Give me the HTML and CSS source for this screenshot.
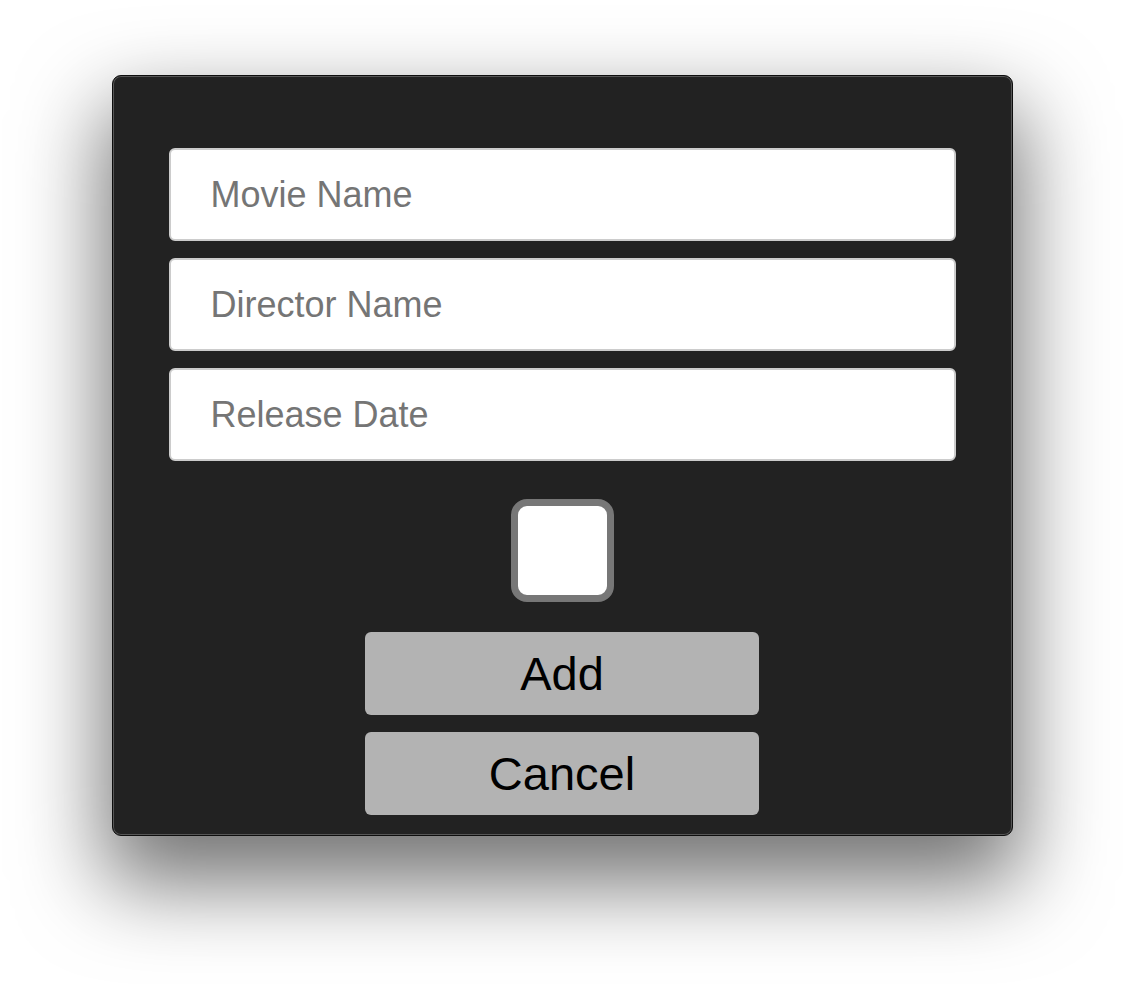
FILE: index.html
```html
<!DOCTYPE html>
<html lang="en">
<head>
<meta charset="utf-8">
<title>Add Movie</title>
<link rel="stylesheet" href="styles.css">
</head>
<body>
<div class="page">
  <div class="window">
    <form class="form">
      <input class="field" type="text" placeholder="Movie Name">
      <input class="field" type="text" placeholder="Director Name">
      <input class="field" type="text" placeholder="Release Date">
      <input class="check" type="checkbox">
      <button class="btn" type="button">Add</button>
      <button class="btn" type="button">Cancel</button>
    </form>
  </div>
</div>
</body>
</html>
```
FILE: styles.css
```css
html, body {
  margin: 0;
  padding: 0;
  background: #ffffff;
  font-family: "Liberation Sans", Arial, sans-serif;
}
.page {
  display: flex;
  justify-content: center;
  padding-top: 75px;
  height: 984px;
  box-sizing: border-box;
}
.window {
  width: 901px;
  height: 761px;
  box-sizing: border-box;
  background: #222222;
  border: 1px solid #0e0e0e;
  border-radius: 9px;
  box-shadow: inset 0 0 0 1px rgba(255,255,255,0.24), 0 40px 85px 8px rgba(0,0,0,0.55);
  padding: 72px 56px 19px;
}
.form {
  display: flex;
  flex-direction: column;
  align-items: center;
  gap: 17px;
  margin: 0;
}
.field {
  display: block;
  width: 787px;
  height: 93px;
  box-sizing: border-box;
  margin: 0;
  border: 2px solid #cccccc;
  border-radius: 6px;
  background: #ffffff;
  padding: 0 40px;
  font-family: "Liberation Sans", Arial, sans-serif;
  font-size: 36px;
  color: #222;
  outline: none;
}
.field::placeholder {
  color: #757575;
  opacity: 1;
}
.check {
  appearance: none;
  -webkit-appearance: none;
  display: block;
  width: 103px;
  height: 103px;
  box-sizing: border-box;
  margin: 21px 0 13px;
  border: 7.5px solid #777777;
  border-radius: 16px;
  background: #ffffff;
}
.btn {
  display: block;
  width: 394px;
  height: 83px;
  margin: 0;
  border: none;
  border-radius: 6px;
  background: #b3b3b3;
  color: #000000;
  font-family: "Liberation Sans", Arial, sans-serif;
  font-size: 47px;
  padding: 0;
}
```
